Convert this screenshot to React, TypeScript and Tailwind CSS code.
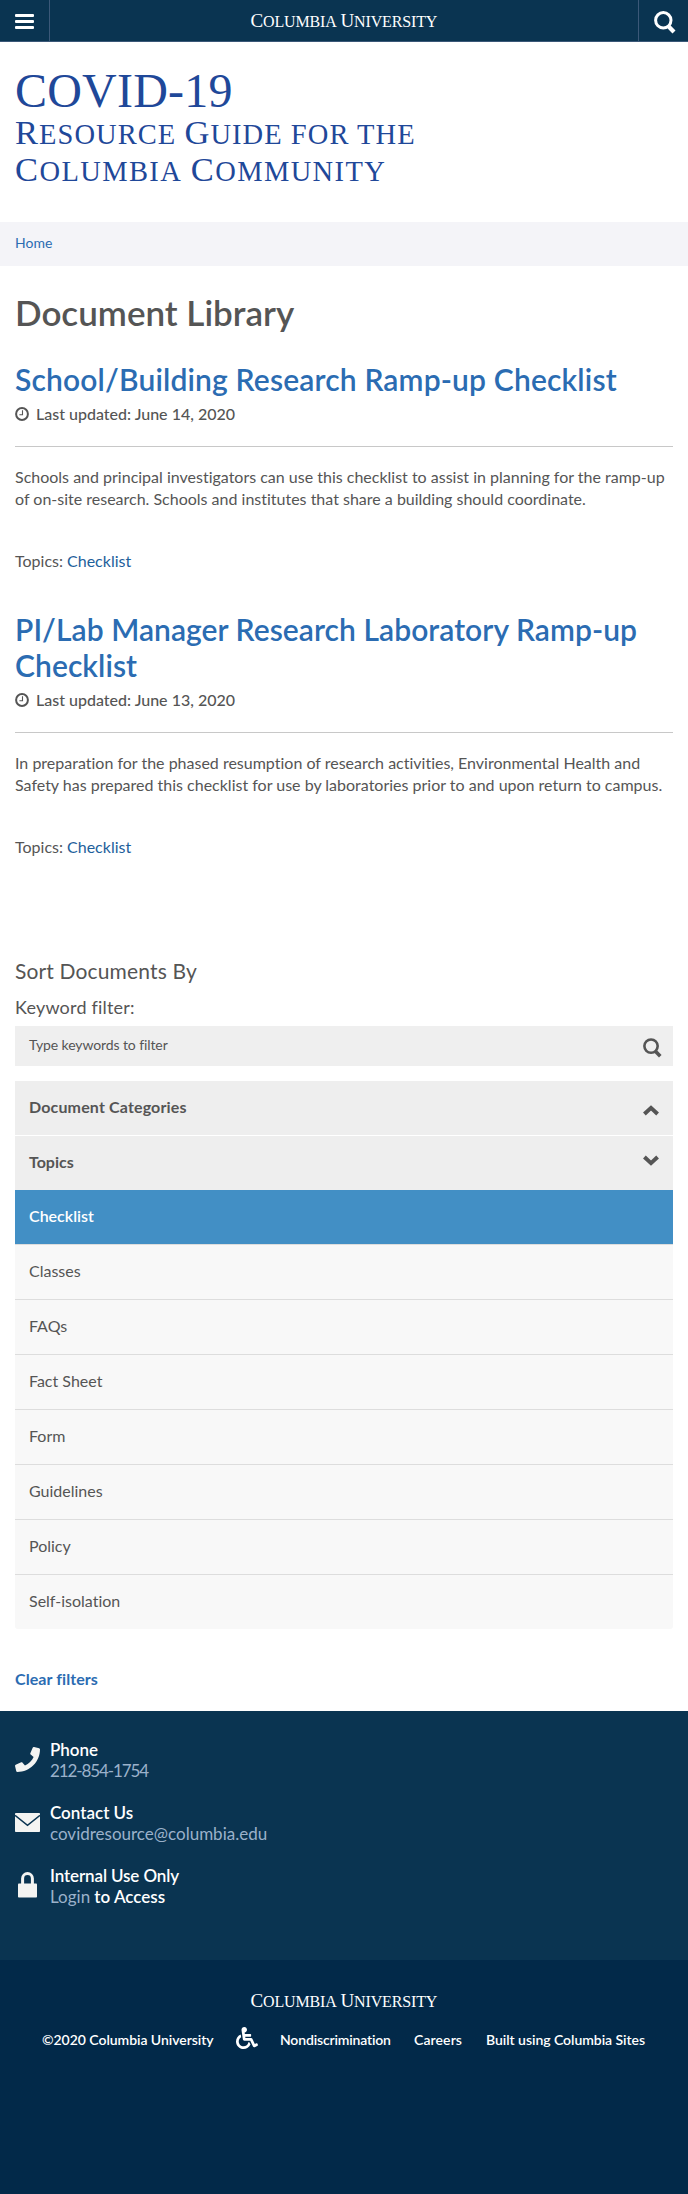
import React from 'react';
import { FaPhone, FaWheelchair } from 'react-icons/fa';

function SearchIcon({ className }: { className: string }) {
  return (
    <svg viewBox="0 0 22 23" className={className} fill="none" stroke="currentColor">
      <circle cx="9.3" cy="9.3" r="7.7" strokeWidth="3" />
      <path d="M14.4 15.2 L20 21" strokeWidth="4.2" />
    </svg>
  );
}

function ClockIcon() {
  return (
    <svg viewBox="0 0 14 14" className="h-[14px] w-[14px] shrink-0" fill="none" stroke="currentColor">
      <circle cx="7" cy="7" r="5.9" strokeWidth="2" />
      <path d="M7.5 3.3 V7.8 H4.4" strokeWidth="1.1" />
    </svg>
  );
}

function MailIcon() {
  return (
    <svg viewBox="0 0 25 19" className="h-[19px] w-[25px]">
      <rect width="25" height="19" rx="0.8" fill="#f4f4f2" />
      <path d="M0 2.4 L12.5 12.4 L25 2.4" fill="none" stroke="#0a3451" strokeWidth="1.5" />
    </svg>
  );
}

function LockIcon() {
  return (
    <svg viewBox="0 0 19 26" className="h-[26px] w-[19px]">
      <rect y="11.5" width="19" height="14" rx="0.8" fill="#f4f4f2" />
      <path d="M4.6 12 V6.4 a4.9 4.9 0 0 1 9.8 0 V12" fill="none" stroke="#f4f4f2" strokeWidth="3" />
    </svg>
  );
}

function Chevron({ up }: { up?: boolean }) {
  return (
    <svg viewBox="0 0 16 11" className="h-[11px] w-[16px]" fill="none" stroke="#555" strokeWidth="4">
      <path d={up ? 'M1.4 9 L8 2.9 L14.6 9' : 'M1.4 2 L8 8.1 L14.6 2'} />
    </svg>
  );
}

function Wordmark() {
  return (
    <div className="h-[24px] w-[187px] whitespace-nowrap font-['Liberation_Serif',serif] text-[16px] leading-[24px] tracking-[-0.15px] text-white uppercase">
      <span className="inline-block first-letter:text-[19px] first-letter:leading-[0]">Columbia</span>{' '}
      <span className="inline-block first-letter:text-[19px] first-letter:leading-[0]">University</span>
    </div>
  );
}

type Doc = { title: React.ReactNode; date: string; lines: string[] };

const docs: Doc[] = [
  {
    title: <span className="tracking-[0.16px]">School/Building Research Ramp-up Checklist</span>,
    date: 'June 14, 2020',
    lines: [
      'Schools and principal investigators can use this checklist to assist in planning for the ramp-up',
      'of on-site research. Schools and institutes that share a building should coordinate.',
    ],
  },
  {
    title: <span className="tracking-[0.06px]">PI/Lab Manager Research Laboratory Ramp-up Checklist</span>,
    date: 'June 13, 2020',
    lines: [
      'In preparation for the phased resumption of research activities, Environmental Health and',
      'Safety has prepared this checklist for use by laboratories prior to and upon return to campus.',
    ],
  },
];

const topics = ['Classes', 'FAQs', 'Fact Sheet', 'Form', 'Guidelines', 'Policy', 'Self-isolation'];

function Article({ doc }: { doc: Doc }) {
  return (
    <article>
      <h2 className="text-[30px] leading-[36px] font-semibold text-[#2b6cb2]">{doc.title}</h2>
      <div className="mt-[5px] flex h-[24px] items-center gap-[7px] text-[16px] leading-[24px] font-medium">
        <ClockIcon />
        <span>Last updated: {doc.date}</span>
      </div>
      <hr className="mt-5 h-px border-0 bg-[#c8c8c8]" />
      <p className="mt-[19px] text-[16px] leading-[22px]">
        {doc.lines.map((l) => (
          <span key={l} className="block whitespace-nowrap">
            {l}
          </span>
        ))}
      </p>
      <p className="mt-10 text-[16px] leading-[22px]">
        Topics: <a className="text-[#1d609b]">Checklist</a>
      </p>
    </article>
  );
}

export default function App() {
  return (
    <div className="w-[688px] overflow-hidden bg-white font-['Lato',sans-serif] text-[#555] [font-variant-ligatures:none]">
      <header className="flex h-[42px] border-b border-[#3b5878] bg-[#0a3451] text-white">
        <div className="flex w-[50px] flex-col gap-[3px] border-r border-[#3b5878] pt-[14px] pl-[15px]">
          <span className="h-[3px] w-[19px] rounded-[1px] bg-white" />
          <span className="h-[3px] w-[19px] rounded-[1px] bg-white" />
          <span className="h-[3px] w-[19px] rounded-[1px] bg-white" />
        </div>
        <div className="flex flex-1 justify-center pt-[10px]">
          <Wordmark />
        </div>
        <div className="w-[50px] border-l border-[#3b5878] pt-[11px] pl-[15px]">
          <SearchIcon className="h-[23px] w-[22px]" />
        </div>
      </header>

      <div className="h-[180px] pt-[28px] pl-[15px] font-['Liberation_Serif',serif] whitespace-nowrap text-[#1f4899] uppercase">
        <div className="text-[48px] leading-[42px] tracking-[0.2px]">COVID-19</div>
        <div className="mt-1 text-[28.5px] leading-[37px] tracking-[1.05px]">
          <span className="inline-block first-letter:text-[34.5px] first-letter:leading-[0]">Resource</span>{' '}
          <span className="inline-block first-letter:text-[34.5px] first-letter:leading-[0]">Guide</span> for the
        </div>
        <div className="text-[28.5px] leading-[37px] tracking-[1.4px]">
          <span className="inline-block first-letter:text-[34.5px] first-letter:leading-[0]">Columbia</span>{' '}
          <span className="inline-block first-letter:text-[34.5px] first-letter:leading-[0]">Community</span>
        </div>
      </div>

      <nav className="h-[44px] bg-[#f4f4f8] pl-[15px] text-[14px] leading-[41px] text-[#2b6cb2]">Home</nav>

      <main className="px-[15px] pt-[26px]">
        <h1 className="text-[35px] leading-[40px] font-semibold">Document Library</h1>
        <div className="mt-[29px] flex flex-col gap-[39px]">
          {docs.map((d) => (
            <Article key={d.date} doc={d} />
          ))}
        </div>

        <h3 className="mt-[99px] text-[21px] leading-[28px] tracking-[0.15px]">Sort Documents By</h3>
        <label className="mt-[10px] block text-[18px] leading-[24px] tracking-[0.2px]">Keyword filter:</label>
        <div className="mt-[7px] flex h-[40px] justify-between bg-[#efefef] pr-[11px] pl-[14px] text-[14px] leading-[37px] tracking-[-0.1px]">
          <span>Type keywords to filter</span>
          <SearchIcon className="mt-3 h-[20px] w-[19px]" />
        </div>

        <div className="mt-[15px] overflow-hidden rounded-b-[3px] text-[16px] leading-[52px]">
          <div className="mb-px flex h-[54px] justify-between bg-[#eee] pr-[14px] pl-[14px] font-bold">
            <span className="tracking-[0.15px]">Document Categories</span>
            <span className="pt-[24px] leading-none">
              <Chevron up />
            </span>
          </div>
          <div className="flex h-[54px] justify-between bg-[#eee] pr-[14px] pl-[14px] font-bold">
            <span>Topics</span>
            <span className="pt-[19px] leading-none">
              <Chevron />
            </span>
          </div>
          <div className="h-[54px] bg-[#428fc5] pl-[14px] font-semibold text-white">Checklist</div>
          {topics.map((t) => (
            <div key={t} className="h-[55px] border-t border-[#ddd] bg-[#f8f8f8] pl-[14px]">
              {t}
            </div>
          ))}
        </div>

        <div className="mt-[39px] mb-[21px] text-[16px] leading-[22px] font-bold tracking-[0.08px] text-[#2b6cb2]">Clear filters</div>
      </main>

      <footer>
        <section className="flex h-[249px] flex-col gap-[21px] bg-[#0a3451] pt-[28px] pl-[15px] text-[17px] leading-[21px] font-semibold text-white">
          <div className="flex gap-[10px]">
            <div className="w-[25px] pt-[8px]">
              <FaPhone className="h-[25px] w-[25px] text-[#f4f4f2]" />
            </div>
            <div>
              <div>Phone</div>
              <div className="font-normal tracking-[-1.1px] text-[#9bb1ca]">212-854-1754</div>
            </div>
          </div>
          <div className="flex gap-[10px]">
            <div className="w-[25px] pt-[11px]">
              <MailIcon />
            </div>
            <div>
              <div>Contact Us</div>
              <div className="font-normal text-[#9bb1ca]">covidresource@columbia.edu</div>
            </div>
          </div>
          <div className="flex gap-[10px]">
            <div className="w-[25px] pt-[7px] pl-[3px]">
              <LockIcon />
            </div>
            <div>
              <div className="tracking-[-0.12px]">Internal Use Only</div>
              <div>
                <span className="font-normal text-[#9bb1ca]">Login</span> to Access
              </div>
            </div>
          </div>
        </section>

        <section className="h-[234px] bg-[#022949] pt-[30px] text-white">
          <div className="flex justify-center">
            <Wordmark />
          </div>
          <div className="mt-[13px] flex pl-[42px] text-[14px] leading-[25px] font-semibold whitespace-nowrap">
            <span className="w-[194px] tracking-[-0.04px]">©2020 Columbia University</span>
            <span className="w-[44px]">
              <FaWheelchair className="h-[22px] w-[22px]" />
            </span>
            <span className="w-[134px] tracking-[-0.16px]">Nondiscrimination</span>
            <span className="w-[72px] tracking-[0.1px]">Careers</span>
            <span className="tracking-[-0.04px]">Built using Columbia Sites</span>
          </div>
        </section>
      </footer>
    </div>
  );
}
